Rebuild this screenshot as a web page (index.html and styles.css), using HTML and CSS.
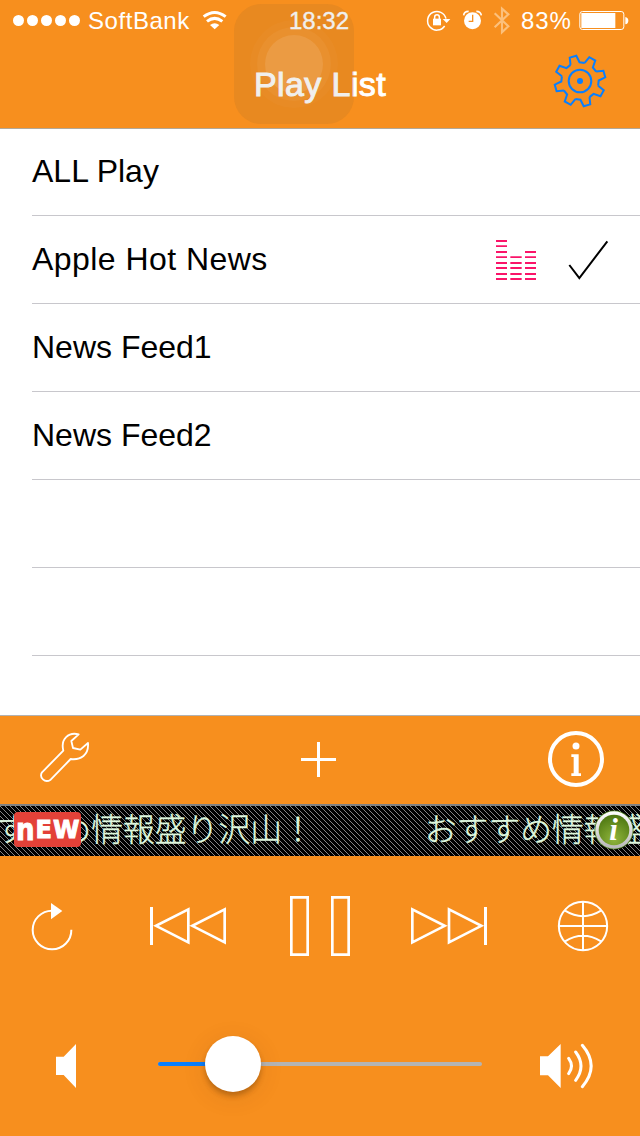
FILE: index.html
```html
<!DOCTYPE html>
<html lang="ja">
<head>
<meta charset="utf-8">
<title>Play List</title>
<link rel="stylesheet" href="styles.css">
</head>
<body>
<div class="screen">
  <header class="header">
    <div class="status">
      <svg class="signal" width="68" height="40" fill="#fff"><circle cx="5.5" cy="20.500" r="5.500"/><circle cx="19.500" cy="20.500" r="5.500"/><circle cx="33.500" cy="20.500" r="5.500"/><circle cx="47.500" cy="20.500" r="5.500"/><circle cx="61.500" cy="20.500" r="5.500"/></svg>
      <span class="carrier">SoftBank</span>
      <svg class="wifi" width="26" height="40" viewBox="606 0 78 120" fill="none" stroke="#fff" stroke-width="9"><path d="M611 50Q644 25 677 50"/><path d="M621 64Q644 46 667 64"/><path d="M644 88L630 75Q644 64 658 75Z" fill="#fff" stroke="none"/></svg>
      <span class="time">18:32</span>
      <svg class="lock" width="26" height="40" viewBox="48 0 78 120" fill="none" stroke="#fff" stroke-width="4.500"><path d="M104 78A28 28 0 1 1 108 56"/><path d="M98 57h23l-11 12z" fill="#fff" stroke="none"/><path d="M69 56h24v20h-24z" fill="#fff" stroke="none"/><path d="M74 57v-6a7 7 0 0 1 14 0v6"/></svg>
      <svg class="alarm" width="22" height="40" viewBox="156 0 66 120"><circle cx="187.500" cy="62" r="25.500" fill="#fff"/><path d="M161 46Q162 34 176 34M199 34Q212 34 214 46" fill="none" stroke="#fff" stroke-width="5"/><path d="M188 44v20h-12" fill="none" stroke="#f78f1e" stroke-width="4"/></svg>
      <svg class="bluetooth" width="18" height="40" viewBox="249 0 54 120" fill="none" stroke="#fcc07c" stroke-width="6.500"><path d="M254 40L295 79L276 97V26L295 43L254 82"/></svg>
      <span class="percent">83%</span>
      <svg class="battery" width="50" height="40" viewBox="509 0 150 120"><rect x="511.500" y="34.500" width="132" height="54" rx="8" fill="none" stroke="#fff" stroke-width="3"/><path d="M516 39h102v45h-102z" fill="#fff"/><path d="M648 51q9 2 9 11t-9 11z" fill="#fff"/></svg>
    </div>
    <div class="navbar">
      <h1 class="title">Play List</h1>
      <svg class="gear" width="56" height="56" viewBox="-28 -28 56 56" fill="none" stroke="#087fff" stroke-width="2">
        <defs><path id="tooth" d="M-4.700-18.100L-3.400-25.300L3.400-25.300L4.700-18.100L9.500-16.100"/></defs>
        <g transform="rotate(-16)"><use href="#tooth"/><use href="#tooth" transform="rotate(45)"/><use href="#tooth" transform="rotate(90)"/><use href="#tooth" transform="rotate(135)"/><use href="#tooth" transform="rotate(180)"/><use href="#tooth" transform="rotate(225)"/><use href="#tooth" transform="rotate(270)"/><use href="#tooth" transform="rotate(315)"/></g>
        <circle r="11.300"/><circle r="3" fill="#087fff" stroke="none"/>
      </svg>
    </div>
    <div class="assist"><svg width="120" height="120" fill="#fff"><circle cx="60" cy="60" r="44" opacity=".025"/><circle cx="60" cy="60" r="37" opacity=".045"/><circle cx="60" cy="60" r="29" opacity=".1"/></svg></div>
  </header>

  <ul class="list">
    <li class="row"><span class="label">ALL Play</span></li>
    <li class="row"><span class="label wide">Apple Hot News</span>
      <svg class="marks" width="144" height="60" viewBox="48 15 432 180" fill="none">
        <g stroke="#fa1469" stroke-width="5.500"><path d="M48 48h33M48 63.500h33M48 81h33M48 96.500h33M48 114h33M48 129h33M48 147h33M48 162h33"/><path d="M91 96.500h34M91 114h34M91 129h34M91 147h34M91 162h34"/><path d="M135 81h33M135 96.500h33M135 114h33M135 129h33M135 147h33M135 162h33"/></g>
        <path d="M268 120L298 159L382 49" stroke="#000" stroke-width="6"/>
      </svg></li>
    <li class="row"><span class="label">News Feed1</span></li>
    <li class="row"><span class="label">News Feed2</span></li>
    <li class="row"></li>
    <li class="row"></li>
  </ul>

  <div class="toolbar">
    <svg class="wrench" width="54" height="60" viewBox="114 75 162 180" fill="none" stroke="#fff" stroke-width="5.500"><path d="M190 137L126 202C117 217 134 236 152 224L212 162C242 166 267 150 264 114L241 134L219 129L214 108L236 88C206 80 181 102 190 137Z" stroke-linejoin="round"/></svg>
    <svg class="plus" width="38" height="60" viewBox="300 75 114 180"><path d="M303 163.500H408M355.500 111V216" stroke="#fff" stroke-width="9"/></svg>
    <svg class="info" width="60" height="60" viewBox="378 75 180 180"><circle cx="468" cy="162" r="78" fill="none" stroke="#fff" stroke-width="12"/><circle cx="468" cy="123" r="10.500" fill="#fff"/><path d="M454 148H476V205H483V213H454V205H461V156H454Z" fill="#fff"/></svg>
  </div>

  <div class="banner">
    <svg class="hatch" width="640" height="50"><defs><pattern id="diag" width="5" height="5" patternUnits="userSpaceOnUse"><path d="M0 0h1v1h-1zM1 1h1v1h-1zM2 2h1v1h-1zM3 3h1v1h-1zM4 4h1v1h-1z" fill="#858585" shape-rendering="crispEdges"/></pattern></defs><rect width="640" height="50" fill="url(#diag)"/></svg>
    <div class="ticker"><span>おすすめ情報盛り沢山！</span><span>おすすめ情報盛り沢山！</span></div>
    <div class="new"><span class="small-n">n</span><span>E</span><span>W</span></div>
    <svg class="badge" width="42" height="42"><defs><radialGradient id="green" cx=".5" cy=".8" r=".8"><stop offset="0" stop-color="#90b53c"/><stop offset="1" stop-color="#4c7610"/></radialGradient><linearGradient id="rim" x2="0" y2="1"><stop stop-color="#fff"/><stop offset="1" stop-color="#b7b7b7"/></linearGradient></defs><circle cx="21" cy="21" r="19.500" fill="#4c7c1c"/><circle cx="21" cy="21" r="18.700" fill="url(#rim)"/><circle cx="21" cy="21" r="15.300" fill="url(#green)"/><text x="20.500" y="31" text-anchor="middle" class="badge-i">i</text></svg>
  </div>

  <div class="player">
    <svg class="reload" width="48" height="66" viewBox="84 39 144 198"><path d="M214 149A58 58 0 1 1 156 92" fill="none" stroke="#fff" stroke-width="6"/><path d="M153 69L187 93L153 118Z" fill="#fff"/></svg>
    <svg class="prev" width="82" height="66" viewBox="444 39 246 198" fill="none" stroke="#fff" stroke-width="8"><path d="M454.500 81V195" stroke-width="9"/><path d="M565 88V187L468 137.500ZM674 88V187L577 137.500Z"/></svg>
    <svg class="pause" width="64" height="66" viewBox="84 39 192 198" fill="none" stroke="#fff" stroke-width="8"><path d="M94 52H143V224H94ZM217 52H266V224H217Z"/></svg>
    <svg class="next" width="82" height="66" viewBox="444 39 246 198" fill="none" stroke="#fff" stroke-width="8"><path d="M676.500 81V195" stroke-width="9"/><path d="M457 88V187L554 137.500ZM567 88V187L664 137.500Z"/></svg>
    <svg class="globe" width="56" height="66" viewBox="225 39 168 198" fill="none" stroke="#fff" stroke-width="6"><circle cx="309" cy="138" r="72.500"/><path d="M236 138H382M309 65V211M255 92Q309 125 363 92M255 184Q309 150 363 184"/></svg>
  </div>

  <div class="volume">
    <svg class="quiet" width="24" height="66" viewBox="102 39 72 198"><path d="M108 110H131L168 72V204L131 165H108Z" fill="#fff"/></svg>
    <div class="track"><div class="fill"></div><div class="knob"></div></div>
    <svg class="loud" width="56" height="66" viewBox="294 39 168 198"><path d="M300 109H324L362 72V204L324 166H300Z" fill="#fff"/><path d="M386 115Q403 138 386 161M407 96Q439 138 407 181M427 76Q480 138 427 200" fill="none" stroke="#fff" stroke-width="9" stroke-linecap="round"/></svg>
  </div>
</div>
</body>
</html>
```
FILE: styles.css
```css
* { box-sizing: border-box; }
body { margin: 0; font-family: "Liberation Sans", Arial, sans-serif; }
svg { display: block; flex: none; }
.screen { width: 640px; height: 1136px; display: flex; flex-direction: column; background: #f78f1e; overflow: hidden; }

.header { position: relative; height: 129px; flex: none; border-bottom: 1px solid #b2a898; color: #fff; }
.status { display: flex; height: 40px; padding-left: 13px; line-height: 41px; font-size: 24px; white-space: nowrap; }
.carrier { width: 114px; margin-left: 7px; letter-spacing: .55px; }
.time { width: 60px; margin-left: 61px; font-size: 24px; -webkit-text-stroke: .4px #fff; }
.lock { margin-left: 77px; }
.alarm { margin-left: 10px; }
.bluetooth { margin-left: 9px; }
.percent { width: 52px; margin-left: 10px; letter-spacing: .9px; }
.battery { margin-left: 6px; }
.navbar { display: grid; grid-template-columns: 1fr 132px 1fr; align-items: center; height: 88px; }
.title { grid-column: 2; margin: 0; font-size: 34px; line-height: 40px; font-weight: 400; letter-spacing: .4px; -webkit-text-stroke: 1px #fff; white-space: nowrap; }
.gear { justify-self: end; margin: -6px 32px 0 0; }
.assist { position: absolute; left: 234px; top: 4px; width: 120px; height: 120px; border-radius: 27px; background: rgba(90, 80, 60, .09); }

.list { height: 586px; flex: none; margin: 0; padding: 0 0 0 32px; list-style: none; background: #fff; }
.row { display: flex; align-items: center; justify-content: space-between; height: 88px; border-bottom: 1px solid #c8c7cc; }
.row:first-child { height: 87px; }
.label { padding-bottom: 2px; font-size: 32px; line-height: 40px; color: #000; white-space: nowrap; }
.wide { letter-spacing: .45px; }

.toolbar { display: flex; align-items: center; height: 89px; flex: none; border-top: 1px solid #b2b2b2; }
.wrench { margin-left: 38px; }
.plus { margin-left: 208px; }
.info { margin-left: 208px; }

.banner { position: relative; height: 52px; flex: none; overflow: hidden; background: #000; border-top: 2px solid #808080; }
.hatch { position: absolute; left: 0; top: 0; }
.ticker { position: relative; display: flex; gap: 111px; height: 50px; margin-left: -36px; font: 300 31.800px/42px "Noto Sans CJK JP", sans-serif; color: #dff8df; -webkit-text-stroke: .4px #dff8df; white-space: nowrap; }
.ticker span { flex: none; }
.new { position: absolute; left: 14px; top: 6px; display: flex; justify-content: center; gap: 1px; width: 67px; height: 35px; border-radius: 4px; background: #e34138; color: #fff; font: bold 24px/37px "DejaVu Sans", sans-serif; -webkit-text-stroke: 1px #fff; }
.small-n { width: 18px; margin-right: 1px; font-size: 31px; line-height: 34px; transform: scaleX(.84); transform-origin: left; }
.badge { position: absolute; left: 593px; top: 3px; }
.badge-i { font: italic bold 31px "Liberation Serif", serif; fill: #fff; }

.player { display: flex; align-items: center; height: 140px; flex: none; padding-left: 28px; }
.prev { margin-left: 72px; }
.pause { margin-left: 58px; }
.next { margin-left: 56px; }
.globe { margin-left: 65px; }

.volume { display: flex; align-items: center; height: 140px; flex: none; padding-left: 54px; }
.track { position: relative; width: 324px; height: 4px; margin: 0 56px 4px 80px; border-radius: 2px; background: #b4b4b4; }
.fill { width: 75px; height: 4px; border-radius: 2px; background: #087fff; }
.knob { position: absolute; left: 47px; top: -26px; width: 56px; height: 56px; border-radius: 50%; background: #fff; box-shadow: 0 4px 5px rgba(80, 40, 0, .3), 0 5px 24px rgba(80, 40, 0, .12); }
```
